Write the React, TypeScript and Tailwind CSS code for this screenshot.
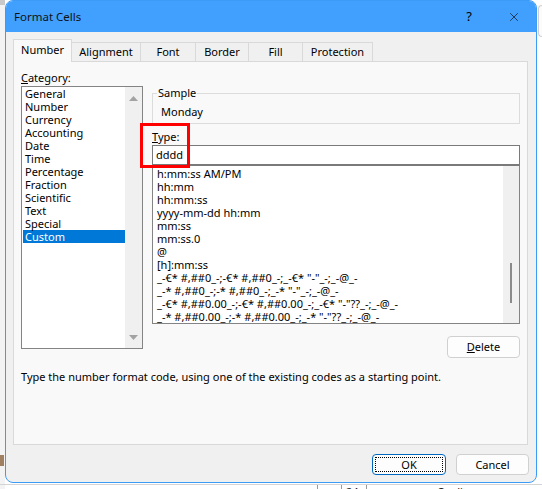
import { X } from 'lucide-react';

const categories = [
  'General',
  'Number',
  'Currency',
  'Accounting',
  'Date',
  'Time',
  'Percentage',
  'Fraction',
  'Scientific',
  'Text',
  'Special',
  'Custom',
];

const formats = [
  'h:mm:ss AM/PM',
  'hh:mm',
  'hh:mm:ss',
  'yyyy-mm-dd hh:mm',
  'mm:ss',
  'mm:ss.0',
  '@',
  '[h]:mm:ss',
  '_-€* #,##0_-;-€* #,##0_-;_-€* "-"_-;_-@_-',
  '_-* #,##0_-;-* #,##0_-;_-* "-"_-;_-@_-',
  '_-€* #,##0.00_-;-€* #,##0.00_-;_-€* "-"??_-;_-@_-',
  '_-* #,##0.00_-;-* #,##0.00_-;_-* "-"??_-;_-@_-',
];

const tabs = [
  { name: 'Number', w: 'w-[59px]' },
  { name: 'Alignment', w: 'w-[69px]' },
  { name: 'Font', w: 'w-[55px]' },
  { name: 'Border', w: 'w-[53px]' },
  { name: 'Fill', w: 'w-[54px]' },
  { name: 'Protection', w: 'w-[70px]' },
];

function Arrow({ up }: { up?: boolean }) {
  return (
    <svg width="9" height="5" viewBox="0 0 9 5">
      {up ? <path d="M0 5 L4.5 0 L9 5 Z" fill="#a3a3a3" /> : <path d="M0 0 L4.5 5 L9 0 Z" fill="#a3a3a3" />}
    </svg>
  );
}

export default function App() {
  return (
    <div className="relative w-[542px] h-[489px] overflow-hidden bg-white font-['Noto_Sans',sans-serif] text-[11px] text-black">
      {/* window behind the dialog */}
      <div className="absolute left-0 top-0 w-[5px] h-[489px] bg-[#f3f3f3]">
        <div className="h-[5px] bg-[#c9c9c9]" />
        <div className="mt-[450px] h-[11px] w-[4px] bg-[#a08060]" />
      </div>
      <div className="absolute right-0 top-[5px] w-[4px] h-[32px] rounded-l-[4px] border border-r-0 border-[#cfcfcf] bg-[#fbfbfb]" />
      <div className="absolute left-0 top-[484px] w-[542px] h-[5px] flex border-t border-[#d4d4d4] text-[#222]">
        <div className="w-[318px] border-r border-[#9a9a9a]" />
        <div className="w-[23px]" />
        <div className="w-[26px] border-x border-[#9a9a9a] pl-[4px] leading-[14px]">24</div>
        <div className="w-[70px]" />
        <div className="leading-[14px]">Cooling</div>
      </div>

      {/* dialog */}
      <div className="absolute left-[5px] top-0 w-[532px] h-[483px] rounded-[8px] border border-[#3d9bf8] bg-[#f0f0f0] overflow-hidden flex flex-col">
        <div className="h-[31px] shrink-0 bg-[#41a0fe] flex items-center pl-[8px]">
          <span className="leading-[16px] text-[11.5px] text-[#111]">Format Cells</span>
          <div className="ml-auto flex h-full">
            <div className="w-[46px] flex items-center justify-center text-[13px]">?</div>
            <div className="w-[44px] flex items-center justify-center">
              <X className="w-[14px] h-[14px]" strokeWidth={1.1} />
            </div>
          </div>
        </div>

        <div className="px-[7px] pt-[7px]">
          <div className="flex items-end h-[22px]">
            {tabs.map((t, i) => (
              <div
                key={t.name}
                className={
                  i === 0
                    ? `${t.w} relative z-10 h-[23px] -mb-[1px] border border-b-0 border-[#d9d9d9] bg-[#f9f9f9] flex items-center justify-center pb-[1px]`
                    : `${t.w} h-[19px] border-t border-r border-[#d9d9d9] bg-[#f0f0f0] flex items-center justify-center`
                }
              >
                {t.name}
              </div>
            ))}
          </div>

          <div className="w-[515px] h-[384px] border border-[#d9d9d9] bg-[#f9f9f9] pt-[8px] pl-[7px]">
            <div className="flex gap-[9px]">
              {/* category */}
              <div className="w-[122px]">
                <div className="h-[16px] leading-[15px]">
                  <span className="underline">C</span>ategory:
                </div>
                <div className="h-[263px] border border-[#848484] bg-white flex">
                  <div className="flex-1 pl-[1px]">
                    {categories.map((c) => (
                      <div
                        key={c}
                        className={`h-[13px] leading-[13px] pl-[2px] ${c === 'Custom' ? 'bg-[#0078d7] text-white' : ''}`}
                      >
                        {c}
                      </div>
                    ))}
                  </div>
                  <div className="w-[17px] bg-[#f0f0f0] flex flex-col items-center justify-between pt-[9px] pb-[8px]">
                    <Arrow up />
                    <Arrow />
                  </div>
                </div>
              </div>

              {/* right side */}
              <div className="w-[368px] flex flex-col">
                <div className="relative mt-[23px] h-[31px] border border-[#dcdcdc]">
                  <span className="absolute -top-[8px] left-[4px] px-[1px] bg-[#f9f9f9] leading-[14px]">Sample</span>
                  <div className="pt-[11px] pl-[8px] leading-[14px]">Monday</div>
                </div>

                <div className="mt-[6px] h-[14px] leading-[13px]">
                  <span className="underline">T</span>ype:
                </div>
                <div className="mt-[1px] h-[20px] border border-[#7a7a7a] bg-white pl-[3px] leading-[17px]">dddd</div>
                <div className="h-[159px] border border-[#848484] border-t-[#7a7a7a] bg-white flex">
                  <div className="flex-1 pt-[1px] pl-[4px] whitespace-nowrap overflow-hidden">
                    {formats.map((f) => (
                      <div key={f} className="h-[13px] leading-[13px]">
                        {f}
                      </div>
                    ))}
                  </div>
                  <div className="relative w-[16px] bg-[#f0f0f0]">
                    <div className="absolute left-[7px] top-[97px] w-[2px] h-[40px] bg-[#8a8a8a]" />
                  </div>
                </div>

                <button className="mt-[12px] self-end w-[73px] h-[22px] rounded-[4px] border border-[#d0d0d0] bg-[#fdfdfd] leading-[18px]">
                  <span className="underline">D</span>elete
                </button>
              </div>
            </div>

            <div className="mt-[12px] leading-[13px]">
              Type the number format code, using one of the existing codes as a starting point.
            </div>
          </div>

          <div className="mt-[9px] flex justify-end gap-[10px]">
            <button className="relative w-[74px] h-[21px] rounded-[4px] border border-[#0067c0] bg-[#fdfdfd] leading-[18px]">
              <span className="absolute inset-[2px] border border-dotted border-black" />
              OK
            </button>
            <button className="w-[73px] h-[21px] rounded-[4px] border border-[#d0d0d0] bg-[#fdfdfd] leading-[18px]">
              Cancel
            </button>
          </div>
        </div>
      </div>

      {/* highlight */}
      <div className="absolute left-[140px] top-[123px] w-[50px] h-[45px] border-[3px] border-[#ff0000]" />
    </div>
  );
}
